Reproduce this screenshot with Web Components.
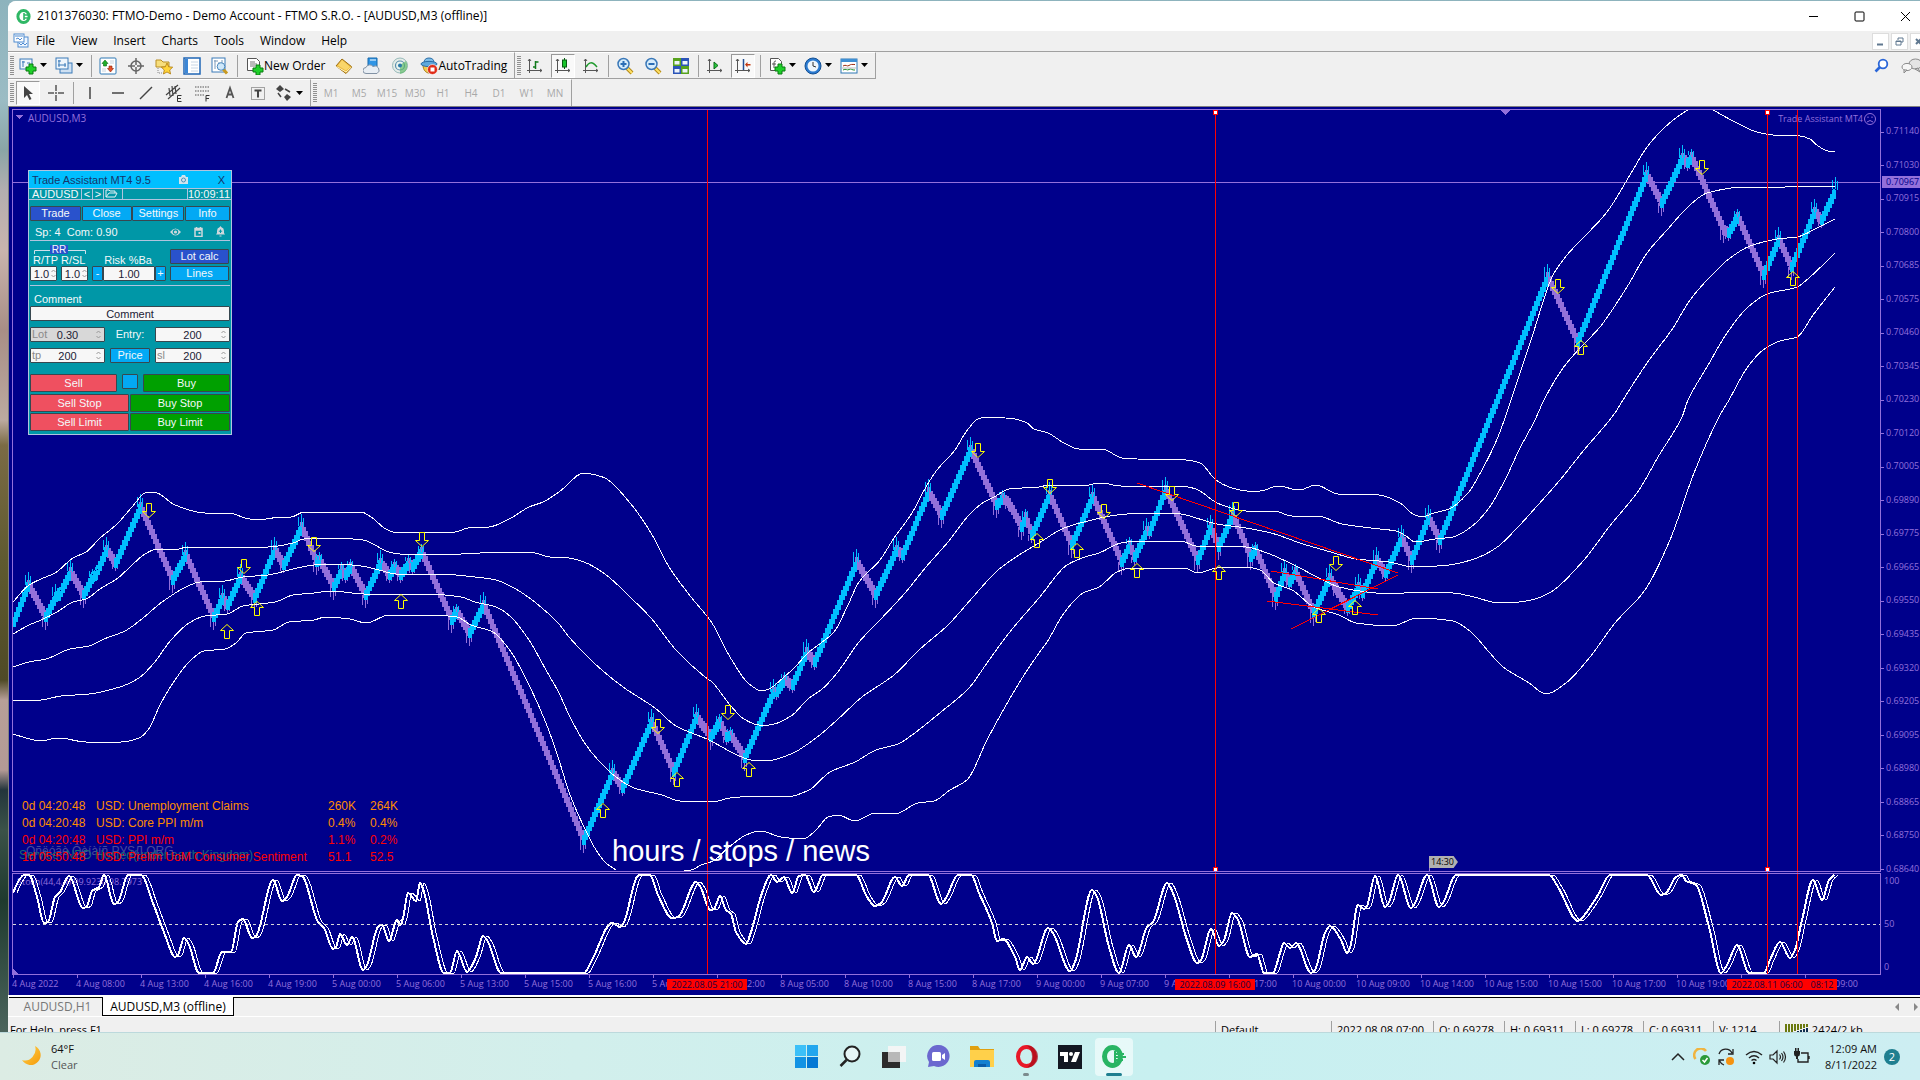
<!DOCTYPE html>
<html lang="en">
<head>
<meta charset="utf-8">
<title>FTMO MetaTrader desktop</title>
<style>
  html, body { margin: 0; height: 100%; overflow: hidden; }
  body { font-family: "Open Sans", "Noto Sans", sans-serif; font-size: 12px; line-height: 16px; color: #000; }
</style>
</head>
<body>
<desk-top>
  <mt-window>
    <mt-titlebar>2101376030: FTMO-Demo - Demo Account - FTMO S.R.O. - [AUDUSD,M3 (offline)]</mt-titlebar>
    <mt-menubar></mt-menubar>
    <mt-toolbars></mt-toolbars>
    <mt-chart><trade-panel></trade-panel></mt-chart>
    <mt-tabs></mt-tabs>
    <mt-status></mt-status>
  </mt-window>
  <task-bar></task-bar>
</desk-top>

<script>
const define = (name, html) => customElements.define(name, class extends HTMLElement {
  constructor() {
    super();
    const t = document.createElement('template');
    t.innerHTML = '<style>:host,*{box-sizing:border-box}button{font:inherit;color:inherit;margin:0;padding:0;border:0;background:none}</style>' +
      (typeof html === 'function' ? html(this) : html);
    this.attachShadow({ mode: 'open' }).append(t.content.cloneNode(true));
  }
});
const svg = (w, h, body, extra = '') =>
  `<svg width="${w}" height="${h}" viewBox="0 0 ${w} ${h}" aria-hidden="true" ${extra}>${body}</svg>`;

/* ---------- toolbar icons, 18 x 18 ---------- */
const plus = (x, y) => `<path d="M${x+3} ${y}h4v3h3v4h-3v3h-4v-3h-3v-4h3z" fill="#1fd02a" stroke="#087a10"/>`;
const axes = '<path d="M3.500 2v14M1 13.500h15M2 4l1.500-2 1.500 2M14 12l2 1.500-2 1.500" fill="none" stroke="#555"/>';
const lens = (s) => `<path d="M11 11l5 5" stroke="#b58a18" stroke-width="4"/><path d="M11 11l5 5" stroke="#ffe268" stroke-width="2"/><circle cx="7.500" cy="7" r="5.500" fill="#d6ecfb" stroke="#3a78b8" stroke-width="1.500"/>${s}`;
const ICONS = {
  newchart: '<rect x="1" y="2" width="12" height="10" fill="#eef5fc" stroke="#3b7ab8"/><path d="M3 5h3M4 4v6M8 6h3" stroke="#3b7ab8"/>' + plus(7, 7),
  profiles: '<rect x="5" y="6" width="12" height="10" fill="#cfe1f3" stroke="#3b7ab8"/><rect x="1" y="1" width="12" height="11" fill="#eef5fc" stroke="#3b7ab8"/><path d="M3 4h3M4 3v7M3 8h8M10 6v4" stroke="#3b7ab8"/>',
  market: '<rect x="1" y="1" width="16" height="16" rx="1" fill="#fff" stroke="#2f78b5"/><path d="M11 4h4M11 6h4M3 12h4M3 14h4" stroke="#c8d4de"/><path d="M6 3l3 3.500H7.500V9h-3V6.500H3z" fill="#1fae2a" stroke="#0a6a12" stroke-width=".6"/><path d="M11.500 15l3-3.500H13V9h-3v2.500H8.500z" fill="#e4502a" stroke="#8c2408" stroke-width=".6"/>',
  cross: '<circle cx="9" cy="9" r="5" fill="none" stroke="#666" stroke-width="1.500"/><path d="M9 1v7M9 10v7M1 9h7M10 9h7" stroke="#666" stroke-width="1.500"/>',
  fav: '<path d="M1 3h5l2 2h6v5H1z" fill="#f7de7c" stroke="#b98f25"/><path d="M3 11v5h4" fill="none" stroke="#888" stroke-dasharray="1 1"/><path d="M12 6l1.700 3.800 4 .4-3 2.800.9 4-3.600-2-3.600 2 .9-4-3-2.800 4-.4z" fill="#ffd43a" stroke="#b07c10" stroke-width=".8"/>',
  nav: '<rect x="1" y="1" width="16" height="16" fill="#fff" stroke="#1f66b5" stroke-width="1.500"/><path d="M2 2h3v14H2z" fill="#3c87d6"/><path d="M8 5h7M8 8h7M8 11h7M8 14h7" stroke="#c8d6e4"/>',
  tester: '<rect x="1" y="1" width="13" height="14" fill="#fff" stroke="#3b7ab8"/><path d="M3 4h4M4 3v9M8 5v7M11 3v9" stroke="#7b99b8"/><path d="M12 12l4 4.500" stroke="#c99a20" stroke-width="3"/><circle cx="10" cy="9.500" r="3.800" fill="#cfe8fa" stroke="#4b88bd"/>',
  order: '<path d="M1.500 1.500h9l3 3v9h-12z" fill="#fff" stroke="#555"/><path d="M4 5h5M4 7h7M4 9h5" stroke="#777"/>' + plus(7, 8),
  diamond: '<path d="M7 2l10 8-6 6.500L1 9z" fill="#eebb3c" stroke="#9c6d12"/><path d="M1.500 9.500l9.500 5.500 5.500-5" fill="none" stroke="#fff3c0"/><path d="M7 3l8 7-4 3.500L3 8.500z" fill="#f9d66a"/>',
  cloud: '<path d="M5 1h9v9H5z" fill="#2f95e6" stroke="#1668ab"/><path d="M7 3h6" stroke="#fff"/><path d="M3 16.500a3 3 0 010-6 4 4 0 017-1 3.500 3.500 0 014 7z" fill="#e8eef4" stroke="#8292a4"/>',
  signal: '<circle cx="9" cy="8.500" r="7.500" fill="#e4ece8" stroke="#9bb"/><circle cx="9" cy="8.500" r="4.500" fill="#eaf5ee" stroke="#5b8fae" stroke-width="1.200"/><path d="M9 8v9c7-1 9-8 6-13z" fill="#59b862" opacity=".65"/><circle cx="9" cy="8.500" r="2" fill="#2d7bab"/>',
  auto: '<path d="M3 8c0 5 3 8 6 8s5-3 6-8z" fill="#f2c94c" stroke="#a87f1c"/><path d="M4 6q0-5 5-5t5 5z" fill="#7dbde8" stroke="#2a6da6"/><ellipse cx="9" cy="7" rx="8" ry="2.600" fill="#5ea8dc" stroke="#2a6da6"/><circle cx="12.500" cy="12.500" r="5" fill="#e02a16" stroke="#fff" stroke-width=".6"/><path d="M10.500 10.500h4v4h-4z" fill="#fff"/>',
  bars: axes + '<path d="M9.500 4v8M9.500 5h3M7 10h2.500" stroke="#117a1c" stroke-width="1.500" fill="none"/>',
  candle: axes + '<path d="M10.500 1v11" stroke="#0a5c12"/><rect x="8.500" y="3" width="4" height="7" fill="#19c52b" stroke="#0a5c12"/>',
  line: axes + '<path d="M4 10c3-5 6-6 11 0" fill="none" stroke="#1e9a2c" stroke-width="1.500"/>',
  zin: lens('<path d="M4.500 7h6M7.500 4v6" stroke="#2b6eb5" stroke-width="2"/>'),
  zout: lens('<path d="M4.500 7h6" stroke="#2b6eb5" stroke-width="2"/>'),
  tiles: '<path d="M1 1h8v8H1z" fill="#58a21d"/><path d="M9 1h8v8H9z" fill="#2b54b8"/><path d="M1 9h8v8H1z" fill="#2b54b8"/><path d="M9 9h8v8H9z" fill="#58a21d"/><path d="M2.500 4h5v3.500h-5zM10.500 4h5v3.500h-5zM2.500 12h5v3.500h-5zM10.500 12h5v3.500h-5z" fill="#eef4fb"/>',
  scroll: axes + '<path d="M8 5l4 3.500-4 3.500z" fill="#27c83a" stroke="#0d6a1a"/>',
  shift: axes + '<path d="M9.500 2v11" stroke="#234f94" stroke-width="1.500"/><path d="M11 7.500l2.500-2.500v2h3v1.500h-3v2z" fill="#c4380e"/>',
  indic: '<path d="M2.500 1.500h8l3 3v9h-11z" fill="#fff" stroke="#555"/><path d="M8 4c-2 0-2 1-2 3v4M4 7h4" fill="none" stroke="#555"/>' + plus(7, 7),
  clock: '<circle cx="9" cy="9" r="8" fill="#2b7ad0" stroke="#134f92"/><circle cx="9" cy="9" r="5.500" fill="#edf5fc"/><path d="M9 5v4l3 1" fill="none" stroke="#333"/>',
  templ: '<rect x="1" y="2" width="16" height="14" fill="#fff" stroke="#2f78b5"/><path d="M1 2h16v3H1z" fill="#3e8fd4"/><path d="M3 9c3-2 4 1 6-.5s3-1 6-1" fill="none" stroke="#9a2a10"/><path d="M3 13c3-2 4 1 6-.5s3 1 6 .5" fill="none" stroke="#1e8f2a"/><path d="M2 11h14" stroke="#bbb"/>',
  cursor: '<path d="M5 2v12l3-3 2.500 5 2-1-2.500-5h4z" fill="#444"/>',
  plusline: '<path d="M9 1v6M9 11v6M1 9h6M11 9h6M8 9h2" stroke="#555" stroke-width="1.500"/>',
  vline: '<path d="M9 3v12" stroke="#444" stroke-width="1.500"/>',
  hline: '<path d="M3 9h12" stroke="#444" stroke-width="1.500"/>',
  tline: '<path d="M3 15L15 3" stroke="#444" stroke-width="1.500"/>',
  chan: '<path d="M1 11L13 1M3 15L15 4M4 4l1 8M7 2l1 10M10 2l1 8" stroke="#444" stroke-width="1.200"/><path d="M16.500 11.500h-4v6h4M12.500 14.500h3.500" fill="none" stroke="#333"/>',
  fibo: '<path d="M2 3h14M2 7h14M2 11h9" stroke="#555" stroke-dasharray="1.500 1"/><path d="M16.500 11.500h-3.500v6M13 14.500h3" fill="none" stroke="#333"/>',
  atext: '<path d="M5.500 14L9 4l3.500 10M6.700 10.500h4.600" fill="none" stroke="#555" stroke-width="1.800"/>',
  ttext: '<rect x="2.500" y="3.500" width="13" height="12" fill="none" stroke="#555" stroke-dasharray="1 1"/><path d="M5.500 6.500h7M9 6.500v7" stroke="#444" stroke-width="2"/>',
  shapes: '<path d="M5 1l4 4-4 3-4-3zM12 10l4 3-4 4-3-4z" fill="#444"/><path d="M3 9l3 4M10 5l5 3" stroke="#444" stroke-width="1.500"/>'
};
const ico = n => svg(18, 18, ICONS[n]);

/* ---------- desktop and window shell ---------- */
define('desk-top', `<style>
  :host{display:flex;flex-direction:column;height:100vh;overflow:hidden;
    background:linear-gradient(180deg,#8db3bd 0,#9bbcc4 100px,#8aa5a6 150px,#b3aeb0 190px,#c9b4ae 250px,#a88e86 330px,#bcaaa0 420px,#7b6b45 445px,#5f5a30 560px,#4f4a26 680px,#b79f98 700px,#b39a96 770px,#23353c 790px,#3b5248 830px,#1f3a2e 900px,#4b645c 1032px)}
  ::slotted(mt-window){flex:1;min-height:0;margin:1px 0 0 8px}
</style><slot></slot>`);

define('mt-window', `<style>
  :host{display:flex;flex-direction:column;overflow:hidden;background:#f0f0f0;border-radius:8px 0 0 0}
  ::slotted(*){flex:none}
  ::slotted(mt-chart){flex:1;min-height:0}
</style><slot></slot>`);

define('mt-titlebar', `<style>
  :host{display:flex;align-items:center;height:30px;background:#fff;padding-left:8px;gap:6px;font-size:12px}
  .t{flex:1;white-space:nowrap}
  .c{display:flex;margin-right:-8px}
  button{width:46px;height:30px;display:grid;place-items:center}
</style>
${svg(15, 15, '<ellipse cx="7.500" cy="7.500" rx="5.600" ry="6" fill="none" stroke="#2fb765" stroke-width="3"/><path d="M8 4v7M8 6h6M8 9h6" stroke="#2fb765" stroke-width="1.600"/>')}
<span class="t"><slot></slot></span>
<span class="c">
<button aria-label="Minimize">${svg(11, 11, '<path d="M1 5.500h9" stroke="#000"/>')}</button>
<button aria-label="Maximize">${svg(11, 11, '<rect x="1" y="1" width="9" height="9" rx="1" fill="none" stroke="#000"/>')}</button>
<button aria-label="Close">${svg(11, 11, '<path d="M1 1l9 9M10 1l-9 9" stroke="#000"/>')}</button></span>`);

define('mt-menubar', `<style>
  :host{display:flex;align-items:center;height:21px;padding-left:5px;border-bottom:1px solid #a0a0a0}
  nav{display:flex;gap:16px;flex:1;margin-left:7px}
  nav button{height:18px}
  .m{display:flex;gap:2px;margin-right:-7px}
  .m button{width:17px;height:17px;background:#fff;border:1px solid #ddd;display:grid;place-items:center}
</style>
${svg(16, 16, '<rect x="5" y="4" width="10" height="10" fill="#eef6ff" stroke="#4f8bd0"/><rect x="1" y="1" width="10" height="8" fill="#fff" stroke="#4f8bd0"/><path d="M2 3h8M3 6l2-1 2 2 2-2M6 10l2 2 2-2 2 2 2-2" stroke="#4f8bd0" fill="none"/>')}
<nav>${['File','View','Insert','Charts','Tools','Window','Help'].map(t => `<button>${t}</button>`).join('')}</nav>
<span class="m">
<button aria-label="Minimize chart">${svg(9, 9, '<path d="M1 7.500h6" stroke="#607890" stroke-width="2"/>')}</button>
<button aria-label="Restore chart">${svg(9, 9, '<path d="M3 3V1h5v4H6M1 4h5v4H1zM1 4.500h5" stroke="#607890" fill="none"/>')}</button>
<button aria-label="Close chart">${svg(9, 9, '<path d="M2 2l5 5M7 2l-5 5" stroke="#607890" stroke-width="2"/>')}</button></span>`);

define('tool-button', host => `<style>
  :host{display:block;flex:none}
  button{display:flex;align-items:center;justify-content:center;height:24px;min-width:28px;white-space:nowrap}
  :host([label]) button{padding:0 5px 0 6px}
  :host([drop]) button{width:36px;justify-content:flex-start;padding-left:3px;gap:2px}
  :host([pressed]) button{min-width:24px;width:24px;margin:0 2px;background:#f9f9f9;border:1px solid;border-color:#999 #fff #fff #999}
  :host([period]) button{color:#a8a8a8;font:10px/16px "Open Sans",sans-serif}
  svg{flex:none}
</style><button aria-label="${host.getAttribute('icon') || host.textContent}">${host.getAttribute('icon') ? ico(host.getAttribute('icon')) : ''}<slot></slot>${host.hasAttribute('drop') ? svg(9, 5, '<path d="M1 0h7L4.500 4z"/>') : ''}</button>`);

const tb = (i, a = '') => `<tool-button icon="${i}" ${a}></tool-button>`;
const tl = (i, t) => `<tool-button icon="${i}" label>${t}</tool-button>`;
define('mt-toolbars', `<style>
  :host{display:block;height:55px;border-bottom:1px solid #808080}
  .row{display:flex;height:27px}
  .grp{display:flex;align-items:center;border-right:1px solid #a0a0a0;border-top:1px solid #fff;padding:0 2px}
  .main .grp{border-bottom:1px solid #a0a0a0}
  .grip{width:4px;height:20px;background:repeating-linear-gradient(#909090 0 1px,transparent 1px 2px)}
  .sep{width:1px;height:22px;background:#a0a0a0;margin:0 2px 0 3px}
  .gap{width:2px}
  .right{display:flex;flex:1;align-items:center;justify-content:flex-end;gap:12px;margin-right:-2px}
</style>
<div class="row main"><div class="grp"><i class="grip"></i><i class="gap"></i>${tb('newchart','drop')}${tb('profiles','drop')}<i class="sep"></i>
${tb('market')}${tb('cross')}${tb('fav')}${tb('nav')}${tb('tester')}<i class="sep"></i>
${tl('order','New Order')}${tb('diamond')}${tb('cloud')}${tb('signal')}${tl('auto','AutoTrading')}</div>
<div class="grp"><i class="grip"></i>${tb('bars')}${tb('candle','pressed')}${tb('line')}<i class="sep"></i>${tb('zin')}${tb('zout')}${tb('tiles')}<i class="sep"></i>
${tb('scroll')}${tb('shift','pressed')}<i class="sep"></i><i class="gap"></i>${tb('indic','drop')}${tb('clock','drop')}${tb('templ','drop')}</div>
<div class="right">${svg(15, 15, '<circle cx="9" cy="6" r="4.300" fill="#fff" stroke="#2a66d8" stroke-width="1.800"/><path d="M6 9l-4.500 4.500" stroke="#2a66d8" stroke-width="2.600"/>')}
${svg(21, 16, '<ellipse cx="14.500" cy="6" rx="6.500" ry="5" fill="#e4e4e4" stroke="#8a8a8a"/><path d="M17 10l2 4-5-3z" fill="#ccc" stroke="#8a8a8a"/><ellipse cx="6" cy="9" rx="5" ry="3.600" fill="#f6f6f6" stroke="#8a8a8a"/><path d="M3 12l0 3 3-3z" fill="#eee" stroke="#8a8a8a"/>')}</div></div>
<div class="row"><div class="grp"><i class="grip"></i>${tb('cursor','pressed')}${tb('plusline')}<i class="sep"></i>${tb('vline')}${tb('hline')}${tb('tline')}${tb('chan')}${tb('fibo')}${tb('atext')}${tb('ttext')}${tb('shapes','drop')}</div>
<div class="grp"><i class="grip"></i>${['M1','M5','M15','M30','H1','H4','D1','W1','MN'].map(t => `<tool-button period>${t}</tool-button>`).join('')}</div></div>`);

/* ---------- chart ---------- */
const PIVOTS = [13,622,28,585,45,617,55,597,58,596,70,572,83,595,92,577,95,575,106,550,115,563,140,507,172,580,185,555,213,617,222,598,227,605,240,577,254,598,274,550,283,565,301,527,316,562,319,560,333,587,341,570,345,575,350,567,365,595,380,563,389,575,394,567,400,575,408,563,412,567,421,552,451,620,456,612,469,633,483,605,583,840,612,773,622,788,651,722,673,772,696,717,710,737,719,722,726,737,730,735,744,758,773,692,776,692,784,680,792,685,806,652,814,662,856,562,875,595,896,550,902,555,928,492,941,515,970,450,996,505,1002,498,1008,503,1021,527,1025,517,1031,535,1049,495,1071,545,1092,497,1121,562,1129,545,1134,557,1146,531,1149,531,1165,490,1197,560,1210,528,1218,547,1232,515,1250,557,1255,550,1275,597,1284,573,1289,582,1295,572,1313,613,1329,578,1336,590,1347,608,1358,587,1362,593,1376,560,1385,573,1401,538,1411,560,1428,518,1439,540,1547,277,1577,342,1646,175,1661,203,1682,158,1687,163,1691,157,1723,230,1728,233,1737,217,1763,275,1778,240,1791,267,1814,212,1821,220,1835,190];
const BANDS = [
  '13,602 29,585 41,579 55,573 73,558 86,552 100,538 116,525 132,507 145,493 150,492 157,493 175,505 205,513 229,513 250,519 266,519 279,517 291,517 304,512 361,512 371,517 386,529 398,533 421,532 455,532 468,528 489,527 511,518 529,507 543,502 559,492 584,473 591,474 605,478 630,503 651,533 669,567 691,597 712,623 730,657 748,683 762,691 769,689 784,677 794,668 809,652 821,643 834,632 848,605 859,582 880,560 894,538 912,513 926,487 937,470 955,450 966,432 978,419 987,417 1015,419 1027,423 1034,429 1048,433 1064,443 1079,449 1102,449 1122,458 1137,459 1186,460 1200,463 1216,480 1229,487 1247,491 1260,491 1278,486 1299,490 1316,485 1338,494 1379,495 1400,503 1413,514 1422,517 1434,513 1449,509 1468,493 1483,468 1498,437 1513,394 1532,337 1548,287 1553,275 1567,255 1583,238 1607,212 1630,175 1647,147 1660,132 1677,117 1688,110 1700,104 1713,110 1733,121 1757,132 1773,135 1800,136 1810,139 1818,146 1828,151 1835,152',
  '13,634 29,625 41,620 57,612 73,602 86,599 100,589 118,578 132,565 145,554 157,549 179,549 186,547 268,547 293,543 304,539 332,538 363,540 375,545 386,551 400,554 421,554 461,554 500,552 529,552 550,557 569,558 584,562 605,574 630,597 651,618 676,650 705,677 712,682 730,705 744,719 759,725 769,725 791,716 809,698 821,690 837,673 859,642 880,620 905,593 926,567 948,542 969,515 984,502 994,497 1009,489 1039,487 1049,485 1081,486 1101,483 1121,486 1181,486 1196,489 1217,503 1228,507 1246,511 1274,511 1292,516 1317,516 1342,524 1371,528 1396,531 1406,536 1415,542 1435,539 1453,537 1471,527 1489,508 1506,478 1519,450 1535,420 1544,400 1563,368 1580,348 1600,327 1627,287 1647,253 1667,230 1690,205 1707,193 1743,187 1767,188 1803,186 1820,186 1835,186',
  '13,667 29,662 46,659 70,649 89,646 104,639 125,631 143,618 162,602 186,587 200,582 225,581 243,577 268,575 293,569 314,565 336,564 361,566 379,570 396,574 439,574 475,577 496,580 514,588 536,603 559,624 569,637 594,663 623,687 655,708 676,726 709,740 737,755 751,760 766,761 791,754 816,738 837,720 862,697 894,675 919,650 948,625 973,597 998,570 1019,555 1039,543 1064,528 1092,520 1117,515 1146,513 1181,514 1196,518 1217,524 1246,528 1271,533 1303,544 1331,552 1356,559 1389,562 1414,567 1449,565 1474,559 1496,548 1519,526 1529,515 1560,480 1584,450 1615,413 1623,400 1647,363 1673,328 1690,300 1710,277 1730,258 1750,246 1777,239 1797,237 1817,228 1835,219',
  '13,701 41,700 61,696 89,694 123,686 139,678 154,663 171,640 189,623 205,616 227,614 243,606 275,602 293,595 314,593 332,591 364,594 429,594 461,597 475,602 496,607 511,617 529,640 546,670 559,693 569,715 584,742 598,760 616,777 634,788 662,795 680,801 712,802 730,798 759,796 787,797 809,790 830,772 855,762 876,750 898,744 912,735 941,712 969,688 987,663 1009,633 1039,598 1067,565 1085,557 1099,553 1121,543 1139,541 1181,541 1196,546 1246,547 1267,553 1296,566 1317,577 1339,587 1367,592 1392,594 1417,592 1453,593 1474,597 1499,603 1519,602 1535,599 1551,592 1584,560 1609,527 1639,490 1658,457 1682,417 1688,400 1707,367 1727,333 1747,308 1767,294 1797,287 1810,277 1835,253',
  '13,734 30,739 39,741 59,738 86,742 121,742 139,738 148,730 161,703 175,680 189,662 204,651 225,649 236,643 246,633 273,630 289,622 314,620 325,617 350,619 366,623 389,615 432,615 457,617 471,625 493,632 511,652 529,685 546,723 559,760 569,792 584,827 596,850 606,863 616,870',
  '684,870 691,870 701,865 713,861 728,848 746,835 760,831 781,837 803,839 816,830 828,817 838,815 855,821 875,813 895,814 918,803 934,801 950,790 967,780 987,740 1009,700 1026,672 1039,653 1047,642 1064,613 1083,593 1099,587 1117,572 1131,568 1185,568 1197,573 1217,568 1246,567 1260,570 1274,583 1292,590 1314,607 1339,615 1356,623 1392,626 1417,618 1453,621 1471,632 1489,652 1503,667 1519,677 1529,683 1546,694 1566,683 1590,657 1615,623 1645,590 1670,540 1694,473 1719,417 1729,400 1747,368 1763,350 1780,341 1797,337 1813,315 1835,287'
];
const STOCH = '13,893 18,882 24,875 29,875 37,897 44,923 48,922 55,897 60,892 69,876 83,908 87,906 92,891 99,887 104,875 114,904 118,902 128,875 141,875 153,903 165,935 175,957 178,955 184,938 189,945 199,973 213,973 222,952 231,952 238,922 243,919 252,938 256,936 273,880 282,901 287,897 297,875 302,876 318,922 324,928 333,949 336,947 340,934 347,945 352,937 363,970 367,965 378,927 382,925 389,941 397,920 400,925 403,918 408,893 416,901 420,883 424,892 433,937 444,973 450,973 457,951 467,972 476,957 483,936 488,942 501,973 584,973 592,960 612,923 620,927 624,922 637,877 640,875 650,875 658,895 672,918 678,917 696,882 701,888 710,910 714,909 720,896 726,910 731,914 736,932 746,944 751,932 762,893 771,875 777,882 784,877 792,893 799,876 805,875 814,892 823,875 856,875 867,897 875,906 881,903 895,877 902,886 909,875 928,875 941,904 946,898 958,875 971,875 979,893 992,923 997,941 1003,939 1015,957 1020,970 1027,957 1033,964 1048,928 1053,933 1070,971 1075,962 1092,890 1097,897 1109,947 1119,973 1129,945 1136,957 1147,927 1153,922 1167,883 1173,893 1187,940 1197,963 1201,960 1211,929 1219,946 1224,940 1232,913 1238,920 1250,957 1257,954 1264,973 1273,973 1280,953 1284,943 1290,948 1296,943 1311,973 1315,970 1325,933 1330,926 1341,940 1347,953 1350,948 1358,905 1364,909 1367,906 1375,876 1385,907 1389,902 1398,875 1411,908 1415,903 1427,875 1439,907 1443,903 1456,875 1549,875 1558,887 1578,921 1582,918 1598,895 1610,875 1647,875 1661,895 1666,893 1676,877 1682,875 1686,881 1696,885 1709,927 1721,973 1727,965 1737,945 1749,973 1764,973 1770,960 1780,942 1790,958 1795,950 1802,920 1813,880 1822,900 1829,880 1834,875';
const DOWN = [149,503,244,559,314,537,422,532,658,719,728,705,978,443,1050,479,1104,504,1172,486,1236,502,1336,556,1558,279,1702,160];
const UP = [227,624,257,601,401,594,603,803,677,772,749,762,1037,533,1077,543,1137,563,1219,565,1319,608,1355,600,1581,340,1793,271];

/* indicator line through its samples, with slopes flattened at each turn so it never overshoots */
function curve(points) {
  const p = points.split(' ').map(s => s.split(',').map(Number)), n = p.length;
  const m = p.map((c, i) => {
    if (!i || i === n - 1) return 0;
    const a = (c[1] - p[i - 1][1]) / (c[0] - p[i - 1][0]), b = (p[i + 1][1] - c[1]) / (p[i + 1][0] - c[0]);
    return a * b <= 0 ? 0 : 2 * a * b / (a + b);
  });
  m[0] = (p[1][1] - p[0][1]) / (p[1][0] - p[0][0]);
  m[n - 1] = (p[n - 1][1] - p[n - 2][1]) / (p[n - 1][0] - p[n - 2][0]);
  let d = `M${p[0]}`;
  for (let i = 1; i < n; i++) {
    const h = (p[i][0] - p[i - 1][0]) / 3;
    d += `C${(p[i - 1][0] + h).toFixed(1)} ${(p[i - 1][1] + h * m[i - 1]).toFixed(1)} ${(p[i][0] - h).toFixed(1)} ${(p[i][1] - h * m[i]).toFixed(1)} ${p[i]}`;
  }
  return d;
}
function candles() {
  let up = '', dn = '';
  for (let i = 0; i + 3 < PIVOTS.length; i += 2) {
    const [x0, y0, x1, y1] = PIVOTS.slice(i, i + 4), rise = y1 < y0;
    let d = '';
    for (let x = x0; x < x1; x += 2) {
      const y = Math.round(y0 + (y1 - y0) * (x - x0) / (x1 - x0));
      d += `M${x - 1} ${y - 5}h4v10h-4z`;
    }
    const big = Math.abs(y1 - y0) > 18 ? 13 : 8, s = rise ? -1 : 1;
    for (const [k, f] of [[0, 1], [-3, .8], [2, .7]])
      d += `M${x1 + k} ${y1}h1v${Math.round(s * big * f)}h-1z`;
    if (rise) up += d; else dn += d;
  }
  return `<path d="${dn}" fill="#9370db"/><path d="${up}" fill="#00bfff"/>`;
}
function arrows() {
  let d = '';
  for (let i = 0; i < DOWN.length; i += 2) d += `M${DOWN[i] - 2.5} ${DOWN[i + 1] + .5}h5v8h4l-6.500 6-6.500-6h4z`;
  for (let i = 0; i < UP.length; i += 2) d += `M${UP[i] - 2.5} ${UP[i + 1] + 14.5}h5v-8h4l-6.500-6-6.500 6h4z`;
  return `<path d="${d}" fill="none" stroke="#ff0"/>`;
}
const handle = (x, y) => `<path d="M${x - 2} ${y - 2}h5v5h-5z" fill="#f00"/><path d="M${x - 1} ${y - 1}h3v3h-3z" fill="#fff"/>`;
const PRICES = '0.71140 0.71030 0.70915 0.70800 0.70685 0.70575 0.70460 0.70345 0.70230 0.70120 0.70005 0.69890 0.69775 0.69665 0.69550 0.69435 0.69320 0.69205 0.69095 0.68980 0.68865 0.68750 0.68640'.split(' ');
const TIMES = ['4 Aug 2022','4 Aug 08:00','4 Aug 13:00','4 Aug 16:00','4 Aug 19:00','5 Aug 00:00','5 Aug 06:00','5 Aug 13:00','5 Aug 15:00','5 Aug 16:00','5 Aug 19:00','5 Aug 22:00','8 Aug 05:00','8 Aug 10:00','8 Aug 15:00','8 Aug 17:00','9 Aug 00:00','9 Aug 07:00','9 Aug 12:00','9 Aug 17:00','10 Aug 00:00','10 Aug 09:00','10 Aug 14:00','10 Aug 15:00','10 Aug 15:00','10 Aug 17:00','10 Aug 19:00','','11 Aug 09:00'];
const NEWS = [['o','0d 04:20:48','USD: Unemployment Claims','260K','264K'],['o','0d 04:20:48','USD: Core PPI m/m','0.4%','0.4%'],['r','0d 04:20:48','USD: PPI m/m','1.1%','0.2%'],['r','1d 05:50:48','USD: Prelim UoM Consumer Sentiment','51.1','52.5']];

const chartArt = () => {
  let ticks = '';
  for (let i = 0; i < PRICES.length; i++) ticks += `M1881 ${Math.round(131.5 + i * 33.5)}h3v1h-3z`;
  for (let i = 0; i < TIMES.length; i++) ticks += `M${13 + i * 64} 975h1v3h-1z`;
  const osc = curve(STOCH);
  return `<svg class="art" viewBox="8 107 1912 888" preserveAspectRatio="none" aria-hidden="true" shape-rendering="crispEdges">
  <defs><clipPath id="plot"><path d="M13 110h1867v761H13z"/></clipPath></defs>
  <path d="M8 107h1v888h-1z" fill="#808080"/>
  <path d="M13 182h1868v1H13z" fill="#9370db"/>
  <g clip-path="url(#plot)">${candles()}
  <g fill="none" stroke="#fff">${BANDS.map(b => `<path d="${curve(b)}"/>`).join('')}</g>
  <path d="M1137 483L1398 573M1271 571L1378 589M1267 601L1378 615M1291 629L1398 575" stroke="#f00" fill="none"/></g>
  <g fill="none" stroke="#fff"><path d="${osc}" stroke-width="2"/><path d="${osc}" transform="translate(4 0)"/></g>
  <path d="M13 924.500H1880" stroke="#d8d8d8" stroke-dasharray="3 3"/>
  <path d="M707 110h1v864h-1zM1215 110h1v864h-1zM1767 110h1v864h-1zM1797 110h1v864h-1z" fill="#f00"/>
  ${handle(1215, 112)}${handle(1767, 112)}${handle(1215, 869)}${handle(1767, 869)}
  <path d="M12 109h1869v1H12zM12 109h1v763h-1zM1880 109h1v763h-1zM12 871h1869v1H12zM12 873h1869v1H12zM12 873h1v102h-1zM1880 873h1v102h-1zM12 974h1869v1H12z${ticks}" fill="#9370db"/>
  <path d="M1501 110h9l-4.500 5zM16 115h7l-3.500 4zM13 969l5 5h-5z" fill="#9370db"/>
  <g shape-rendering="auto">${arrows()}</g>
  <path d="M1429 856h1v15h-1z" fill="#9370db"/>
  <g shape-rendering="auto" fill="none" stroke="#9370db"><circle cx="1870" cy="119" r="5.500"/><path d="M1867 122q3-3 6 0M1868 116.500v1.500M1872 116.500v1.500"/></g>
  </svg>`;
};

define('mt-chart', `<style>
  :host{display:grid;position:relative;grid-template:minmax(0,1fr) 100px 20px / minmax(0,1fr) 39px;background:#00008b;color:#9370db;font:9px/12px "Open Sans","Noto Sans",sans-serif;overflow:hidden}
  .art{position:absolute;inset:0;width:100%;height:100%}
  .plot,.osc,.px,.lv,.tm{position:relative;white-space:nowrap}
  .plot{grid-area:1/1}.px{grid-area:1/2}.osc{grid-area:2/1}.lv{grid-area:2/2}
  .px,.lv{display:flex;flex-direction:column;justify-content:space-between;padding-left:5px}
  .px{padding-top:18px}
  .lv{padding-bottom:2px;padding-left:3px}
  .tm{grid-area:3/1/4/3;display:grid;grid-template-columns:repeat(29,64px);padding:3px 0 0 4px}
  .tag{position:absolute;top:4px;width:80px;height:11px;line-height:11px;background:#f00;color:#200040;text-align:center}
  .bid{position:absolute;left:1px;right:0;top:69px;height:12px;padding-left:4px;background:#9370db;color:#00008b}
  .sym{position:absolute;left:20px;top:5px;font-size:10px}
  .ea{position:absolute;right:18px;top:6px}
  .t30{position:absolute;left:1421px;bottom:7px;padding:0 4px 0 2px;background:#b0b0b0;color:#000;clip-path:polygon(0 0,85% 0,100% 50%,85% 100%,0 100%)}
  .note{position:absolute;left:604px;bottom:7px;font:29px/34px "Liberation Sans",Arial,sans-serif;color:#fff}
  .ghost{position:absolute;left:11px;bottom:13px;font:12px/14px "Liberation Sans",Arial,sans-serif;color:#1c6a78}
  .ghost.b{left:18px;bottom:17px;color:#4a4a9a}
  table{position:absolute;left:14px;bottom:9px;border-collapse:collapse;font:12px/17px "Liberation Sans",Arial,sans-serif}
  td{padding:0} td:nth-child(1){width:74px} td:nth-child(2){width:232px} td:nth-child(3){width:42px}
  .o{color:#ff8c00}.r{color:#f00}
  .sto{position:absolute;left:9px;top:1px}
  ::slotted(trade-panel){position:absolute;left:20px;top:63px}
</style>
<div class="plot"><span class="sym">AUDUSD,M3</span><span class="ea">Trade Assistant MT4</span></div>
<div class="px">${PRICES.map(p => `<span>${p}</span>`).join('')}<span class="bid">0.70967</span></div>
<div class="osc"><span class="sto">Stoch(44,4,4) 99.9230 98.7973</span></div>
<div class="lv"><span>100</span><span>50</span><span>0</span></div>
<div class="tm">${TIMES.map(t => `<span>${t}</span>`).join('')}</div>
${chartArt()}
<div class="plot"><span class="ghost b">Óñëóãè Ôèíàíñ PУSЛ.ORG</span><span class="ghost">Service: NDD Hosted(under earth Kingdom)</span>
<table>${NEWS.map(r => `<tr class="${r[0]}">${r.slice(1).map(c => `<td>${c}</td>`).join('')}</tr>`).join('')}</table>
<span class="note">hours / stops / news</span><span class="t30">14:30</span></div>
<div class="tm"><span class="tag" style="left:659px">2022.08.05 21:00</span><span class="tag" style="left:1167px">2022.08.09 16:00</span><span class="tag" style="left:1719px">2022.08.11 06:00</span><span class="tag" style="left:1799px;width:30px">08:12</span></div>
<slot></slot>`);

/* ---------- trade assistant panel ---------- */
const spin = `<svg class="sp" width="5" height="9" viewBox="0 0 5 9" aria-hidden="true"><path d="M.5 3l2-2 2 2M.5 6l2 2 2-2" fill="none" stroke="#999"/></svg>`;
const field = (w, v, label, pre = '', cls = '', s = true) => `<label class="f ${cls}" style="width:${w}px"><span class="pre">${pre}</span><input aria-label="${label}" value="${v}">${s ? spin : ''}</label>`;
define('trade-panel', `<style>
  :host{display:flex;flex-direction:column;width:204px;border:1px solid #b0c4de;background:#0097a7;color:#f4f8fa;font:11px/14px "Liberation Sans",Arial,sans-serif;padding-bottom:3px}
  header{display:flex;align-items:center;height:17px;background:#00bfff;color:#15356a;padding:0 6px 0 3px}
  header span{flex:1}
  header button{margin-left:29px}
  .top{display:flex;height:12px;border-top:1px solid #b0c4de;border-bottom:1px solid #b0c4de;line-height:10px}
  .top>*{border-right:1px solid #b0c4de;height:10px;line-height:10px}
  .top select{appearance:none;background:none;border-width:0 1px 0 0;color:inherit;font:inherit;width:53px;padding:0 0 0 3px}
  .top .x{width:11px}.top .fo{width:19px}.top .gap{flex:1}.top .ck{border:0;width:43px;white-space:nowrap}
  .row{display:flex;padding:0 1px;margin-top:6px;height:15px;justify-content:space-between}
  .b{background:#03a9f4;border:1px solid #37474f;border-radius:1px;height:15px;line-height:13px;text-align:center}
  .d{background:#2952cc}
  .info{display:flex;align-items:center;height:20px;padding:2px 5px 0 5px;border-bottom:1px solid #b0c4de;margin:0 1px}
  .info span{flex:1}.info svg{margin-left:13px}
  .f{display:flex;position:relative;align-items:center;height:15px;background:#f7f7f7;border:1px solid #37474f;border-radius:1px;color:#212135}
  .f input{width:100%;min-width:0;border:0;padding:0;background:none;font:inherit;color:inherit;text-align:center;height:13px}
  .n{padding-right:4px}.n .sp{right:0}
  .sp{position:absolute;right:3px;top:2px}
  .pre{position:absolute;left:1px;top:-1px;color:#8a8a8a}
  .g{background:#d8d8d8}
  .lot{display:flex;margin:0 1px;height:45px;border-bottom:1px solid #b0c4de;position:relative}
  .c{display:flex;flex-direction:column;justify-content:flex-end;padding-bottom:4px}
  .c>span{height:13px;line-height:14px;white-space:nowrap}
  .risk{display:flex}
  .br{position:absolute;left:4px;top:8px}
  .rr{position:absolute;left:20px;top:4px;width:18px;height:9px;line-height:9px;overflow:hidden;font-size:10px;background:#2952cc;text-align:center;border-radius:1px}
  .cl{padding:6px 5px 0;height:20px}
  .s{background:#ef5060}.y{background:#00a000}
  .h{height:18px;line-height:16px}
</style>
<header><span>Trade Assistant MT4 9.5</span>${svg(11, 9, '<path d="M1 2h2l1-2h3l1 2h2v7H1z" fill="#d0e4ee"/><circle cx="5.500" cy="5" r="2" fill="none" stroke="#4a90b8"/>')}<button aria-label="Close panel">X</button></header>
<div class="top"><select aria-label="Symbol"><option>AUDUSD</option></select><button class="x">&lt;</button><button class="x">&gt;</button><span class="fo">${svg(14, 9, '<path d="M2 8V1h3l1 1h5v2M2 8l3-4h8l-2 4z" fill="none" stroke="#e6f2f6"/>')}</span><span class="gap"></span><span class="ck">10:09:11</span></div>
<div class="row"><button class="b d" style="width:51px">Trade</button><button class="b" style="width:50px">Close</button><button class="b" style="width:52px">Settings</button><button class="b" style="width:45px">Info</button></div>
<div class="info"><span>Sp: 4 &nbsp;Com: 0.90</span>${svg(11, 10, '<path d="M0 5q5.500-7 11 0q-5.500 7-11 0z" fill="#cfd8dc"/><circle cx="5.500" cy="5" r="2.200" fill="#cfd8dc" stroke="#0097a7" stroke-width="1.200"/>')}${svg(9, 10, '<path d="M1 1.500h7v8H1zM1 3h7M2.500 0v2M6.500 0v2" fill="none" stroke="#cfd8dc" stroke-width="1.500"/><path d="M4.500 5h2v2h-2z" fill="#cfd8dc"/>')}${svg(9, 11, '<path d="M4.500 0l1 1.200Q8 2 8 5v2l1 1.500H0L1 7V5Q1 2 3.500 1.200z" fill="#cfd8dc"/><path d="M3.500 10h2" stroke="#cfd8dc"/><path d="M4.500 3.500v3.500M2.800 5.200h3.400" stroke="#0097a7"/>')}</div>
<div class="lot">${svg(52, 6, '<path d="M.5 5V1.500h51V5" fill="none" stroke="#cfe0ec"/>', 'class="br"')}<span class="rr">RR</span>
<div class="c" style="width:31px"><span>&nbsp;R/TP</span>${field(27, '1.0', 'Reward ratio', '', 'n')}</div>
<div class="c" style="width:31px"><span>R/SL</span>${field(27, '1.0', 'Risk ratio', '', 'n')}</div>
<div class="c" style="width:78px"><span>&nbsp; &nbsp; Risk %Ba</span><div class="risk"><button class="b" style="width:11px">-</button>${field(52, '1.00', 'Risk percent', '', '', false)}<button class="b" style="width:11px">+</button></div></div>
<div class="c" style="gap:2px"><button class="b d" style="width:59px">Lot calc</button><button class="b" style="width:59px">Lines</button></div></div>
<div class="cl">Comment</div>
<div class="row" style="margin-top:0">${field(200, 'Comment', 'Comment', '', '', false)}</div>
<div class="row">${field(75, '0.30', 'Lot', 'Lot', 'g')}<span>Entry:</span>${field(75, '200', 'Entry')}</div>
<div class="row">${field(75, '200', 'Take profit', 'tp')}<button class="b" style="width:40px">Price</button>${field(75, '200', 'Stop loss', 'sl')}</div>
<div class="row h" style="margin-top:11px"><button class="b s h" style="width:87px">Sell</button><button class="b" style="width:16px" aria-label="Close all"></button><button class="b y h" style="width:87px">Buy</button></div>
<div class="row h" style="margin-top:2px"><button class="b s h" style="width:99px">Sell Stop</button><button class="b y h" style="width:100px">Buy Stop</button></div>
<div class="row h" style="margin-top:1px"><button class="b s h" style="width:99px">Sell Limit</button><button class="b y h" style="width:100px">Buy Limit</button></div>`);

/* ---------- tabs and status ---------- */
define('mt-tabs', `<style>
  :host{display:flex;height:22px;border-top:2px solid #fff;border-bottom:1px solid #fff;padding-left:1px}
  .l{flex:1;display:flex;border-top:1px solid #000;align-items:center}
  button{height:17px;white-space:nowrap;line-height:17px;align-self:flex-start}
  .off{width:93px;color:#777;padding-left:4px}
  .on{width:132px;margin-top:-1px;height:19px;background:#fff;border:1px solid #000;border-top:0;line-height:19px}
  .nav{margin-left:auto}
</style><div class="l"><button class="off">AUDUSD,H1</button><button class="on">AUDUSD,M3 (offline)</button>${svg(26, 8, '<path d="M5 0v8L1 4zM20 0v8l4-4z" fill="#888"/>', 'class="nav"')}</div>`);

define('mt-status', `<style>
  :host{display:flex;align-items:flex-start;height:15px;overflow:hidden;padding:4px 57px 0 2px;font-size:11px;line-height:18px}
  span{border-left:1px solid #a0a0a0;padding-left:5px;height:18px;white-space:nowrap}
  .h{flex:1;border:0;padding:0}
</style><span class="h">For Help, press F1</span>
<span style="width:116px">Default</span><span style="width:102px">2022.08.08 07:00</span><span style="width:71px">O: 0.69278</span><span style="width:71px">H: 0.69311</span><span style="width:68px">L: 0.69278</span><span style="width:70px">C: 0.69311</span><span style="width:66px">V: 1214</span>
<span style="width:84px">${svg(24, 10, '<path d="M1 0v10M4 0v9M7 0v8M10 0v7M13 0v6M16 0v5M19 0v4M22 0v3" stroke="#6b7a10" stroke-width="2"/><path d="M7 9v1M10 8v2M13 7v3M16 6v4M19 5v5M22 4v6" stroke="#103050" stroke-width="2"/>')} 2424/2 kb</span>`);

/* ---------- taskbar ---------- */
define('task-bar', `<style>
  :host{flex:none;display:grid;grid-template-columns:1fr auto 1fr;height:48px;align-items:center;background:linear-gradient(90deg,#dcece4 0,#d2efec 30%,#c8f0f0 60%,#cdeef2 100%);border-top:1px solid #bcd9dc;font-size:11px;line-height:16px;color:#111}
  .w{display:flex;align-items:center;gap:8px;padding-left:22px}
  .w small{display:block;font-size:11px;color:#555}
  .apps{display:flex}
  .apps button{width:44px;height:46px;display:grid;place-items:center;position:relative}
  .apps .on::before{content:"";position:absolute;inset:4px 3px;border-radius:4px;background:#ffffff90}
  .apps svg{position:relative}
  .apps .on::after,.apps .run::after{content:"";position:absolute;bottom:4px;width:6px;height:3px;border-radius:2px;background:#7b8b8d}
  .apps .on::after{width:16px;background:#1f7f90}
  .tray{display:flex;justify-content:flex-end;align-items:center;padding-right:20px}
  .tray svg{margin:0 3px}
  .tray i{width:4px}
  .ck{text-align:right;margin:0 7px 0 11px}
  .n{width:16px;height:16px;border-radius:8px;background:#1f7f90;color:#fff;text-align:center}
</style>
<div class="w">${svg(21, 21, '<defs><linearGradient id="m" x1="0" y1="0" x2="1" y2="1"><stop stop-color="#ffd34d"/><stop offset="1" stop-color="#f59a0a"/></linearGradient></defs><path d="M13 0a10 10 0 11-13 14Q6 16 10.500 11T13 0z" fill="url(#m)"/>')}<div>64°F<small>Clear</small></div></div>
<div class="apps">
<button aria-label="Start">${svg(23, 23, '<path d="M0 0h11v11H0z" fill="#3cc0f8"/><path d="M12 0h11v11H12z" fill="#22a6ee"/><path d="M0 12h11v11H0z" fill="#1293e4"/><path d="M12 12h11v11H12z" fill="#0478d4"/>')}</button>
<button aria-label="Search">${svg(23, 23, '<circle cx="13" cy="9" r="7.500" fill="#e6f5f5" stroke="#222" stroke-width="2"/><path d="M7.500 15L1.500 21" stroke="#222" stroke-width="2.500"/>')}</button>
<button aria-label="Task view">${svg(24, 22, '<rect x="0" y="6" width="18" height="16" fill="#2c2c2c"/><rect x="6" y="0" width="18" height="16" fill="#f4f4f4" opacity=".95"/><rect x="6" y="6" width="12" height="10" fill="#b8b8b8"/>')}</button>
<button aria-label="Chat">${svg(23, 23, '<path d="M12 0a11 11 0 11-5 21l-6 1 1-5A11 11 0 0112 0z" fill="#6b68cf"/><rect x="5" y="7" width="9" height="9" rx="1.500" fill="#fff"/><path d="M15 10l3-2v7l-3-2z" fill="#fff"/>')}</button>
<button aria-label="Explorer">${svg(24, 22, '<path d="M0 0h8l2 3h14v18H0z" fill="#e0a010"/><path d="M0 4h24v17H0z" fill="#ffd04a"/><path d="M4 21v-5q0-2 2-2h12q2 0 2 2v5z" fill="#1380d0"/><path d="M8 21v-3h8v3z" fill="#0a5ca8"/>')}</button>
<button class="run" aria-label="Opera">${svg(23, 23, '<ellipse cx="11.500" cy="11.500" rx="8.500" ry="9.500" fill="none" stroke="#e81828" stroke-width="4"/><path d="M12 .5a11 11 0 010 22q5-4 5-11t-5-11z" fill="#a80c18" opacity=".7"/>')}</button>
<button aria-label="TradingView">${svg(24, 24, '<path d="M0 0h24v24H0z" fill="#131722"/><path d="M2 7h8v10H6v-6H2z" fill="#fff"/><circle cx="13" cy="9" r="2" fill="#fff"/><path d="M17 7h5l-4 10h-5z" fill="#fff"/>')}</button>
<button class="on" aria-label="FTMO">${svg(24, 23, '<ellipse cx="10.500" cy="11.500" rx="8" ry="9" fill="none" stroke="#28b463" stroke-width="5"/><path d="M13 6v12M12 9h10M12 12h12M12 15h9" stroke="#28b463" stroke-width="2"/>')}</button>
</div>
<div class="tray">
${svg(18, 18, '<path d="M3 12l6-6 6 6" fill="none" stroke="#222" stroke-width="1.500"/>')}
${svg(18, 18, '<path d="M13 3A6.500 6.500 0 102.500 11" fill="none" stroke="#f0b440" stroke-width="2.500"/><circle cx="12" cy="12" r="5" fill="#2a9a3a"/><path d="M9.500 12l2 2 3-4" fill="none" stroke="#fff" stroke-width="1.500"/>')}
${svg(18, 18, '<path d="M2 6a7 7 0 0113-1M16 1v5h-5M2 17v-5h5M2 12q2 4 5 5" fill="none" stroke="#222" stroke-width="1.300"/><circle cx="13" cy="13" r="4" fill="#f59210"/>')}
<i></i>
${svg(18, 18, '<path d="M1 7q8-7 16 0M4 10q5-4.500 10 0M6.500 12.500q2.500-2.200 5 0" fill="none" stroke="#222" stroke-width="1.400"/><circle cx="9" cy="15" r="1.300"/>')}
${svg(18, 18, '<path d="M1 7h3l4-4v12l-4-4H1zM10.500 6.500q2 2.500 0 5M12.500 5q3 4 0 8M14.500 3.500q4 5.500 0 11" fill="none" stroke="#222" stroke-width="1.200"/>')}
${svg(18, 18, '<path d="M8 5h7v9H5v-3M16 8v3" fill="none" stroke="#222" stroke-width="1.400"/><path d="M1 3h6v3q0 2-2 2.500V11H3V8.500Q1 8 1 6zM2 0h1.500v3H2zM4.500 0H6v3H4.500z" fill="#222"/>')}
<div class="ck">12:09 AM<br>8/11/2022</div><div class="n">2</div></div>`);
</script>
</body>
</html>
